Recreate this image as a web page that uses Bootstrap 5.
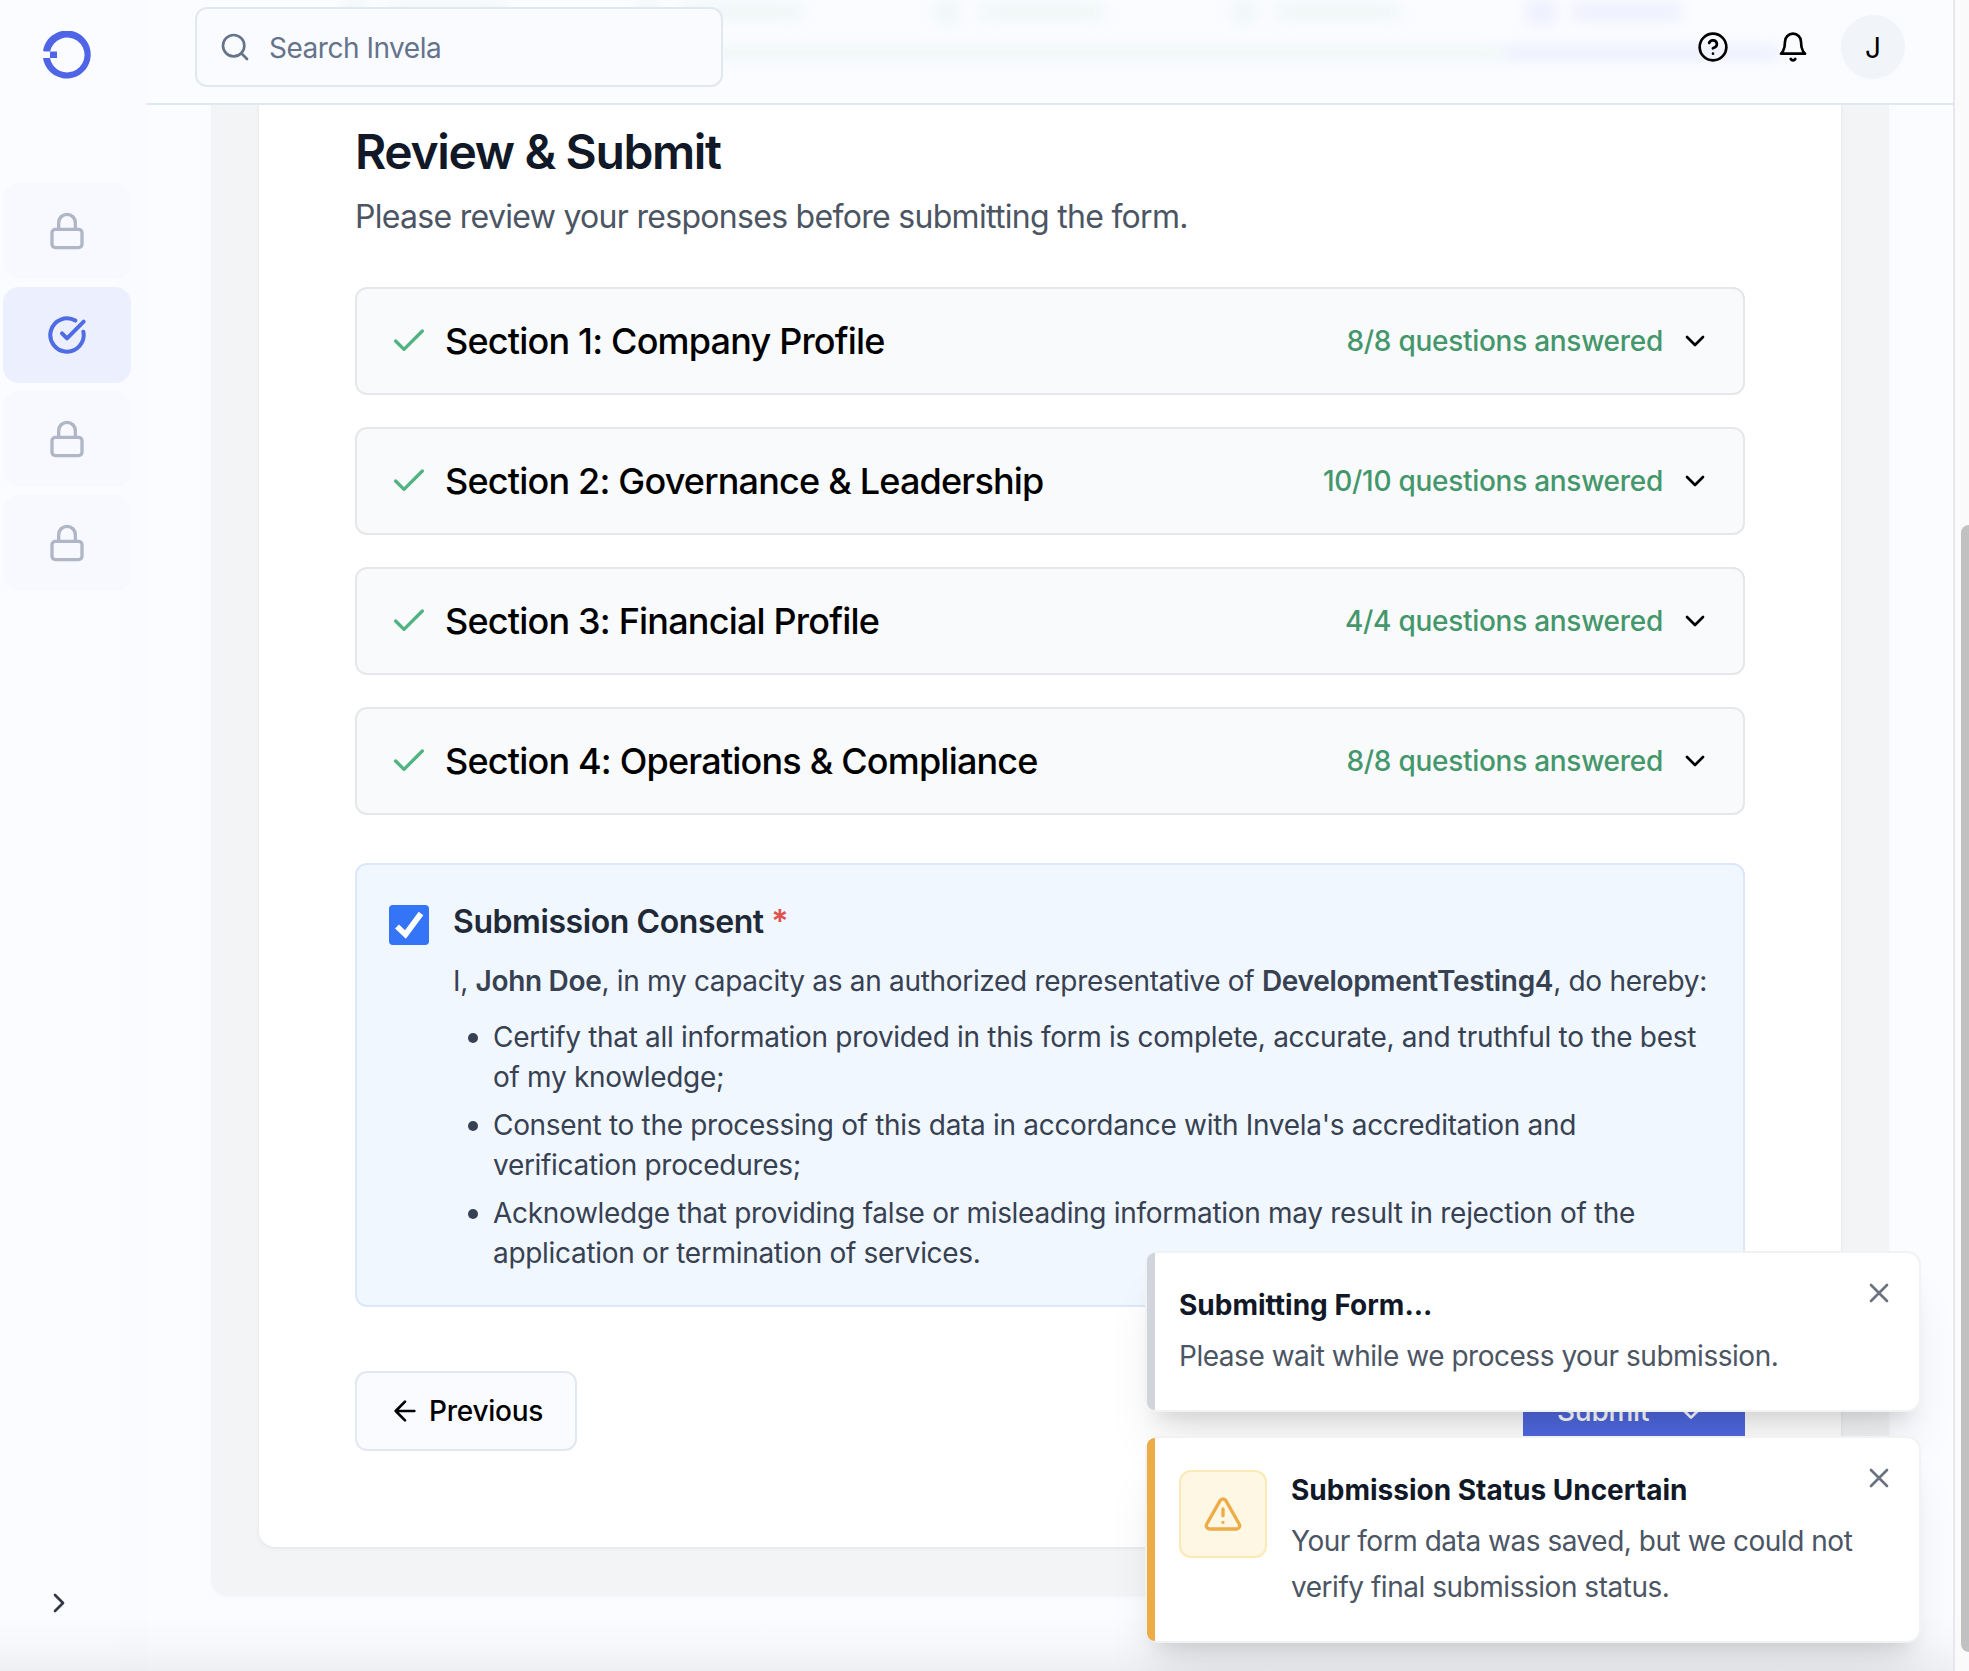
<!DOCTYPE html>
<html lang="en">
<head>
<meta charset="utf-8">
<meta name="viewport" content="width=device-width, initial-scale=1">
<title>Invela – Review &amp; Submit</title>
<link rel="stylesheet" href="https://cdn.jsdelivr.net/npm/bootstrap@5.3.0/dist/css/bootstrap.min.css">
<style>
body{font-family:Inter,"Liberation Sans",sans-serif;font-size:28px;line-height:40px;color:#000;background:#fbfcff;height:1671px;overflow:hidden}
svg{display:block;fill:none;stroke:currentColor;stroke-width:2;stroke-linecap:round;stroke-linejoin:round;flex:none}
.i32{width:32px;height:32px}.i40{width:40px;height:40px}
.app-shell{height:1671px}
.main-col{min-width:0}
.side-nav{width:147px;background:linear-gradient(90deg,#fbfcff 119px,#fafbff 119px)}
.brand-logo{width:48px;height:48px;margin:31px 0 0 43px}
.nav-tiles{margin:104px 0 0 3px;gap:8px}
.nav-tile{width:128px;height:96px;border-radius:16px;background:#f8f9fe;color:#afb6c5}
.nav-tile.current{background:#ebeffe;color:#4f6ce4}
.nav-tile.current svg{stroke-width:2.4}
.expand-btn{color:#333846;margin:0 0 52px 43px}
.top-bar{height:105px;border-bottom:2px solid #e2e8f0;background:#fbfcff;padding:7px 48px 0 48px;position:relative;overflow:hidden}
.top-icons{gap:48px;margin-top:8px}
.search-box{width:528px;height:80px;border:2px solid #e2e8f0;border-radius:12px;background:#fafbff;color:#64748b;padding:0 22px;gap:18px;letter-spacing:-.48px}
.search-box span{padding-top:2px}
.avatar{width:64px;height:64px;background:#f1f5f9;margin-left:-16px;padding-top:1px}
.ghost-layer{filter:blur(7px)}
.ghost-layer i{position:absolute;background:#eff7f6;border-radius:8px}
.ghost-layer i.blue{background:#eceffe}
.panel-grey{margin:0 64px;padding:0 48px 49px;background:#f3f4f6;border-radius:0 0 16px 16px;box-shadow:0 2px 4px rgba(0,0,0,.025)}
.form-sheet{background:#fff;border-radius:0 0 16px 16px;padding:15px 96px 96px;box-shadow:0 1px 4px rgba(0,0,0,.07)}
.page-title{font-size:48px;line-height:64px;font-weight:600;letter-spacing:-1.37px;color:#111827;margin:0 0 9px}
.page-sub{font-size:32px;line-height:48px;letter-spacing:-.7px;color:#4b5563;margin:0 0 46px}
.section-list{gap:32px}
.section-row{height:108px;border:2px solid #e5e7eb;border-radius:12px;background:#f9fafc;padding:0 32px;gap:16px}
.section-name{font-size:36px;font-weight:500;letter-spacing:-.81px}
.tick{color:#50b381}
.answered{color:#44976a;font-weight:500;letter-spacing:-.28px}
.consent-box{margin-top:48px;border:2px solid #dbe8fc;border-radius:12px;background:#f0f7ff;padding:32px;gap:24px;color:#374151;height:444px;letter-spacing:-.31px}
.check-wrap{width:40px;height:40px;margin-top:8px;background:#3474f6;border-radius:4px;color:#fff}
.consent-title{font-size:32px;line-height:48px;font-weight:600;letter-spacing:-.42px;color:#1f2937;padding-top:1px;margin:0 0 15px}
.consent-text{white-space:nowrap;margin:0 0 16px}
.consent-list{padding-left:40px;margin:0;list-style:none;white-space:nowrap}
.consent-list li{position:relative}
.consent-list li+li{margin-top:8px}
.consent-list li::before{content:"";position:absolute;left:-25px;top:16px;width:10px;height:10px;border-radius:50%;background:#374151}
.required{color:#e0524c}
b{font-weight:600}
.form-actions{margin-top:64px}
.btn-step{height:80px;width:222px;padding:0 32px;border:2px solid #e2e8f0;border-radius:12px;background:#fafbff;font-size:28px;font-weight:500;letter-spacing:-.25px;color:#000}
.btn-send{background:#4f68df;border-color:#4f68df;color:#fff}
.scroll-track{width:16px;border-left:2px solid #e7e8ea;background:#fafafa;padding:525px 0 0 6px}
.scroll-thumb{height:1127px;background:#c1c1c1;border-radius:8px 0 0 8px}
.page-fade{position:absolute;left:0;top:1615px;width:1953px;height:56px;background:linear-gradient(rgba(0,0,0,0),rgba(0,0,0,.018) 55%,rgba(0,0,0,.05));pointer-events:none}
.toast-stack{position:absolute;left:1145px;top:1251px;width:776px;gap:24px}
.notice{position:relative;background:#fff;border:2px solid #f1f2f4;border-radius:14px;padding:31px 24px 31px 32px;box-shadow:0 40px 50px -10px rgba(0,0,0,.09),0 16px 20px -12px rgba(0,0,0,.12);gap:24px;height:161px}
.notice::before{content:"";position:absolute;left:0;top:0;bottom:0;width:8px;background:#d1d5db;border-radius:12px 0 0 12px/12px 0 0 12px}
.notice.warn{height:207px}
.notice.warn::before{background:#eeac47}
.notice-title{font-weight:700;line-height:42px;color:#111827;margin-bottom:7px}
.notice-text{line-height:46px;letter-spacing:-.47px;color:#4b5563;white-space:nowrap}
.notice-close{position:absolute;right:24px;top:24px;color:#6b7280}
.warn-icon{width:88px;height:88px;margin-top:1px;border:2px solid #fbeab5;border-radius:12px;background:#fef7e3;color:#eeac47;flex:none}
</style>
</head>
<body>
<div class="app-shell d-flex position-relative">
  <aside class="side-nav d-flex flex-column flex-shrink-0">
    <svg class="brand-logo" viewBox="0 0 48 48"><path fill="#4f65e5" stroke="none" d="M0 20A24 24 0 1 1 0 27H7A17.4 17.4 0 1 0 7.2 20ZM7 21H14V27H7Z"/><path d="M1 20.5H14" stroke="#aab4f4" stroke-width="1" stroke-linecap="butt"/></svg>
    <nav class="nav-tiles d-flex flex-column">
      <a class="nav-tile d-flex align-items-center justify-content-center"><svg class="i40" viewBox="0 0 24 24"><rect x="3" y="11" width="18" height="11" rx="2"/><path d="M7 11V7a5 5 0 0 1 10 0v4"/></svg></a>
      <a class="nav-tile current d-flex align-items-center justify-content-center"><svg class="i40" viewBox="0 0 24 24"><path d="M21.801 10A10 10 0 1 1 17 3.335"/><path d="m9 11 3 3L22 4"/></svg></a>
      <a class="nav-tile d-flex align-items-center justify-content-center"><svg class="i40" viewBox="0 0 24 24"><rect x="3" y="11" width="18" height="11" rx="2"/><path d="M7 11V7a5 5 0 0 1 10 0v4"/></svg></a>
      <a class="nav-tile d-flex align-items-center justify-content-center"><svg class="i40" viewBox="0 0 24 24"><rect x="3" y="11" width="18" height="11" rx="2"/><path d="M7 11V7a5 5 0 0 1 10 0v4"/></svg></a>
    </nav>
    <a class="expand-btn mt-auto"><svg class="i32" viewBox="0 0 24 24"><path d="m9 18 6-6-6-6"/></svg></a>
  </aside>

  <div class="main-col flex-grow-1">
    <header class="top-bar d-flex align-items-start justify-content-between">
      <!-- Form progress steps, scrolled under the translucent header -->
      <div class="ghost-layer position-absolute top-0 start-0 w-100 h-100">
        <i style="left:197px;top:0;width:22px;height:22px"></i><i style="left:240px;top:4px;width:120px;height:16px"></i>
        <i style="left:490px;top:0;width:22px;height:22px"></i><i style="left:534px;top:4px;width:122px;height:16px"></i>
        <i style="left:788px;top:0;width:24px;height:24px"></i><i style="left:832px;top:4px;width:126px;height:16px"></i>
        <i style="left:1085px;top:0;width:24px;height:24px"></i><i style="left:1128px;top:4px;width:126px;height:16px"></i>
        <i class="blue" style="left:1380px;top:0;width:28px;height:24px"></i><i class="blue" style="left:1424px;top:4px;width:112px;height:16px"></i>
        <i style="left:100px;top:46px;width:1256px;height:14px"></i><i class="blue" style="left:1356px;top:46px;width:278px;height:14px"></i>
      </div>
      <div class="search-box d-flex align-items-center position-relative">
        <svg class="i32" viewBox="0 0 24 24"><circle cx="11" cy="11" r="8"/><path d="m21 21-4.3-4.3"/></svg>
        <span>Search Invela</span>
      </div>
      <div class="top-icons d-flex align-items-center position-relative">
        <svg class="i32" viewBox="0 0 24 24"><circle cx="12" cy="12" r="10"/><path d="M9.09 9a3 3 0 0 1 5.83 1c0 2-3 3-3 3M12 17h.01"/></svg>
        <svg class="i32" viewBox="0 0 24 24"><path d="M6 8a6 6 0 0 1 12 0c0 7 3 9 3 9H3s3-2 3-9M10.3 21a1.94 1.94 0 0 0 3.4 0"/></svg>
        <div class="avatar rounded-circle d-flex align-items-center justify-content-center">J</div>
      </div>
    </header>

    <main class="panel-grey">
      <div class="form-sheet">
        <h1 class="page-title">Review &amp; Submit</h1>
        <p class="page-sub">Please review your responses before submitting the form.</p>
        <div class="section-list d-flex flex-column">
          <div class="section-row d-flex align-items-center"><svg class="i40 tick" viewBox="0 0 24 24"><path d="M20 6 9 17l-5-5"/></svg><span class="section-name">Section 1: Company Profile</span><span class="answered ms-auto">8/8 questions answered</span><svg class="i32" viewBox="0 0 24 24"><path d="m6 9 6 6 6-6"/></svg></div>
          <div class="section-row d-flex align-items-center"><svg class="i40 tick" viewBox="0 0 24 24"><path d="M20 6 9 17l-5-5"/></svg><span class="section-name">Section 2: Governance &amp; Leadership</span><span class="answered ms-auto">10/10 questions answered</span><svg class="i32" viewBox="0 0 24 24"><path d="m6 9 6 6 6-6"/></svg></div>
          <div class="section-row d-flex align-items-center"><svg class="i40 tick" viewBox="0 0 24 24"><path d="M20 6 9 17l-5-5"/></svg><span class="section-name">Section 3: Financial Profile</span><span class="answered ms-auto">4/4 questions answered</span><svg class="i32" viewBox="0 0 24 24"><path d="m6 9 6 6 6-6"/></svg></div>
          <div class="section-row d-flex align-items-center"><svg class="i40 tick" viewBox="0 0 24 24"><path d="M20 6 9 17l-5-5"/></svg><span class="section-name">Section 4: Operations &amp; Compliance</span><span class="answered ms-auto">8/8 questions answered</span><svg class="i32" viewBox="0 0 24 24"><path d="m6 9 6 6 6-6"/></svg></div>
        </div>

        <div class="consent-box d-flex align-items-start">
          <div class="check-wrap flex-shrink-0" role="checkbox" aria-checked="true"><svg class="i40" viewBox="0 0 40 40"><path d="M8 21.5 16.5 29.5 32 8.5" stroke-width="5.8" stroke-linecap="butt" stroke-linejoin="miter"/></svg></div>
          <div>
            <h2 class="consent-title">Submission Consent <span class="required">*</span></h2>
            <p class="consent-text">I, <b>John Doe</b>, in my capacity as an authorized representative of <b>DevelopmentTesting4</b>, do hereby:</p>
            <ul class="consent-list">
              <li>Certify that all information provided in this form is complete, accurate, and truthful to the best<br>of my knowledge;</li>
              <li>Consent to the processing of this data in accordance with Invela's accreditation and<br>verification procedures;</li>
              <li>Acknowledge that providing false or misleading information may result in rejection of the<br>application or termination of services.</li>
            </ul>
          </div>
        </div>

        <div class="form-actions d-flex justify-content-between">
          <button class="btn btn-step d-flex align-items-center gap-2"><svg class="i32" viewBox="0 0 24 24"><path d="m12 19-7-7 7-7M19 12H5"/></svg>Previous</button>
          <button class="btn btn-step btn-send d-flex align-items-center justify-content-between">Submit<svg class="i32" viewBox="0 0 24 24"><path d="M20 6 9 17l-5-5"/></svg></button>
        </div>
      </div>
    </main>
  </div>

  <div class="scroll-track flex-shrink-0"><div class="scroll-thumb"></div></div>
  <div class="page-fade"></div>

  <div class="toast-stack d-flex flex-column">
    <div class="notice d-flex align-items-start">
      <div><div class="notice-title">Submitting Form...</div><div class="notice-text">Please wait while we process your submission.</div></div>
      <svg class="i32 notice-close" viewBox="0 0 24 24"><path d="M18 6 6 18M6 6l12 12"/></svg>
    </div>
    <div class="notice warn d-flex align-items-start">
      <div class="warn-icon d-flex align-items-center justify-content-center"><svg class="i40" viewBox="0 0 24 24"><path d="m21.73 18-8-14a2 2 0 0 0-3.48 0l-8 14A2 2 0 0 0 4 21h16a2 2 0 0 0 1.73-3M12 9v4M12 17h.01"/></svg></div>
      <div><div class="notice-title">Submission Status Uncertain</div><div class="notice-text">Your form data was saved, but we could not<br>verify final submission status.</div></div>
      <svg class="i32 notice-close" viewBox="0 0 24 24"><path d="M18 6 6 18M6 6l12 12"/></svg>
    </div>
  </div>
</div>
<script src="https://cdn.jsdelivr.net/npm/bootstrap@5.3.0/dist/js/bootstrap.bundle.min.js"></script>
</body>
</html>
